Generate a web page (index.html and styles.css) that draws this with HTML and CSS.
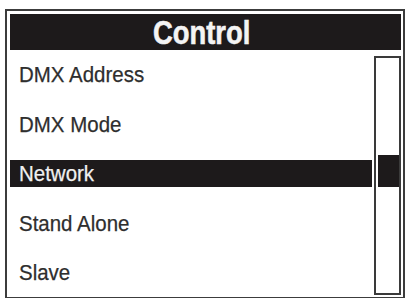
FILE: index.html
```html
<!DOCTYPE html>
<html>
<head>
<meta charset="utf-8">
<link rel="stylesheet" href="styles.css">
</head>
<body>
<div class="frame">
  <div class="header"><span class="title">Control</span></div>
  <div class="content">
    <ul class="list">
      <li class="item"><span class="label">DMX Address</span></li>
      <li class="item"><span class="label">DMX Mode</span></li>
      <li class="item selected"><span class="label">Network</span></li>
      <li class="item"><span class="label">Stand Alone</span></li>
      <li class="item"><span class="label">Slave</span></li>
    </ul>
    <div class="scrollbar"><div class="thumb"></div></div>
  </div>
</div>
</body>
</html>
```
FILE: styles.css
```css
html, body {
  margin: 0;
  padding: 0;
  background: #ffffff;
}
body {
  font-family: "Liberation Sans", Arial, sans-serif;
}
.frame {
  box-sizing: border-box;
  margin: 9px 0 0 5px;
  width: 400px;
  height: 290px;
  border: 2px solid #3c3c3c;
  padding: 3px 2px 2px 3px;
  display: flex;
  flex-direction: column;
  background: #fff;
}
.header {
  height: 36px;
  flex: none;
  background: #1d1a1b;
  color: #f4f4f4;
  display: flex;
  justify-content: center;
  padding-right: 8px;
}
.title {
  display: inline-block;
  font-weight: bold;
  font-size: 33px;
  line-height: 36px;
  padding-top: 1px;
  transform: scaleX(0.83);
  -webkit-text-stroke: 0.6px #f4f4f4;
}
.content {
  flex: 1;
  display: flex;
}
.list {
  list-style: none;
  margin: 0;
  padding: 11px 0 0 0;
  width: 363px;
  display: flex;
  flex-direction: column;
  gap: 22.5px;
}
.item {
  height: 27px;
  line-height: 27px;
  font-size: 22.5px;
  padding-left: 9px;
  color: #2e2e2e;
  white-space: nowrap;
}
.label {
  display: inline-block;
  transform: scaleX(0.91);
  transform-origin: left center;
  -webkit-text-stroke: 0.25px #2e2e2e;
}
.item.selected {
  background: #1d1a1b;
  color: #f0f0f0;
}
.item.selected .label {
  -webkit-text-stroke: 0.25px #f0f0f0;
}
.scrollbar {
  box-sizing: border-box;
  margin: 6px 0 0 2px;
  width: 27px;
  height: 239px;
  border: 2px solid #3a3a3a;
  position: relative;
}
.thumb {
  position: absolute;
  left: 2px;
  right: 0;
  top: 97px;
  height: 32px;
  background: #1d1a1b;
}
```
